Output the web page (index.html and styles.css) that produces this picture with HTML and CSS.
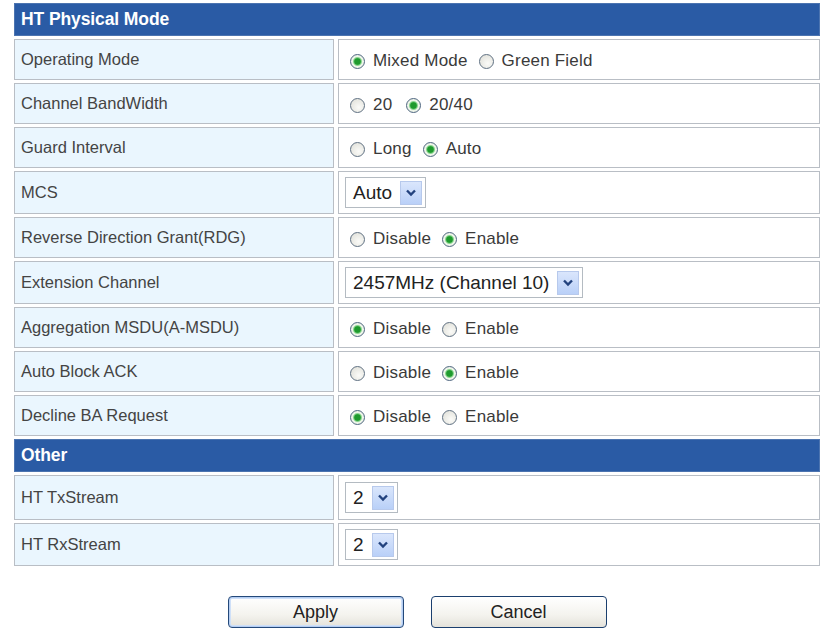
FILE: index.html
```html
<!DOCTYPE html>
<html>
<head>
<meta charset="utf-8">
<link rel="stylesheet" href="styles.css">
</head>
<body>
<div class="page">
<table class="cfg">
  <colgroup><col class="c1"><col class="c2"></colgroup>
  <tr class="head"><td colspan="2">HT Physical Mode</td></tr>
  <tr>
    <td class="lbl">Operating Mode</td>
    <td class="val"><label class="opt"><span class="radio on"></span>Mixed Mode</label><label class="opt"><span class="radio"></span>Green Field</label></td>
  </tr>
  <tr>
    <td class="lbl">Channel BandWidth</td>
    <td class="val"><label class="opt"><span class="radio"></span>20</label><label class="opt wide"><span class="radio on"></span>20/40</label></td>
  </tr>
  <tr>
    <td class="lbl">Guard Interval</td>
    <td class="val"><label class="opt"><span class="radio"></span>Long</label><label class="opt"><span class="radio on"></span>Auto</label></td>
  </tr>
  <tr class="tall">
    <td class="lbl">MCS</td>
    <td class="val"><span class="sel"><span class="sv">Auto</span><span class="arr"><svg width="12" height="8" viewBox="0 0 12 8"><path d="M2 1.5 L6 5.5 L10 1.5" fill="none" stroke="#22427e" stroke-width="2.4"/></svg></span></span></td>
  </tr>
  <tr>
    <td class="lbl">Reverse Direction Grant(RDG)</td>
    <td class="val"><label class="opt"><span class="radio"></span>Disable</label><label class="opt"><span class="radio on"></span>Enable</label></td>
  </tr>
  <tr class="tall">
    <td class="lbl">Extension Channel</td>
    <td class="val"><span class="sel"><span class="sv">2457MHz (Channel 10)</span><span class="arr"><svg width="12" height="8" viewBox="0 0 12 8"><path d="M2 1.5 L6 5.5 L10 1.5" fill="none" stroke="#22427e" stroke-width="2.4"/></svg></span></span></td>
  </tr>
  <tr>
    <td class="lbl">Aggregation MSDU(A-MSDU)</td>
    <td class="val"><label class="opt"><span class="radio on"></span>Disable</label><label class="opt"><span class="radio"></span>Enable</label></td>
  </tr>
  <tr>
    <td class="lbl">Auto Block ACK</td>
    <td class="val"><label class="opt"><span class="radio"></span>Disable</label><label class="opt"><span class="radio on"></span>Enable</label></td>
  </tr>
  <tr>
    <td class="lbl">Decline BA Request</td>
    <td class="val"><label class="opt"><span class="radio on"></span>Disable</label><label class="opt"><span class="radio"></span>Enable</label></td>
  </tr>
  <tr class="head"><td colspan="2">Other</td></tr>
  <tr class="tall2">
    <td class="lbl">HT TxStream</td>
    <td class="val"><span class="sel"><span class="sv">2</span><span class="arr"><svg width="12" height="8" viewBox="0 0 12 8"><path d="M2 1.5 L6 5.5 L10 1.5" fill="none" stroke="#22427e" stroke-width="2.4"/></svg></span></span></td>
  </tr>
  <tr class="tall">
    <td class="lbl">HT RxStream</td>
    <td class="val"><span class="sel"><span class="sv">2</span><span class="arr"><svg width="12" height="8" viewBox="0 0 12 8"><path d="M2 1.5 L6 5.5 L10 1.5" fill="none" stroke="#22427e" stroke-width="2.4"/></svg></span></span></td>
  </tr>
</table>
<div class="buttons">
  <button class="btn default">Apply</button>
  <button class="btn">Cancel</button>
</div>
</div>
</body>
</html>
```
FILE: styles.css
```css
html, body {
  margin: 0;
  padding: 0;
  background: #ffffff;
}
body {
  font-family: "Liberation Sans", Arial, sans-serif;
  color: #333;
}
.page {
  width: 833px;
}
.cfg {
  margin-left: 10px;
  width: 814px;
  border-collapse: separate;
  border-spacing: 4px 3px;
  table-layout: fixed;
}
.c1 { width: 320px; }
.cfg td {
  padding: 0;
  box-sizing: border-box;
  line-height: 1.1;
}
.cfg tr {
  height: 41px;
}
.cfg tr.head { height: 33px; }
.cfg tr.tall { height: 43px; }
.cfg tr.tall2 { height: 45px; }
.head td {
  background: #2a5ba5;
  border: 1px solid #4c74b0;
  color: #fff;
  font-weight: bold;
  font-size: 17.5px;
  padding-left: 6px;
  letter-spacing: -0.1px;
}
.lbl {
  background: #eaf6fe;
  border: 1px solid #b9bec5;
  font-size: 16.5px;
  color: #444;
  padding-left: 6px !important;
}
.val {
  background: #fff;
  border: 1px solid #b9bec5;
  padding-left: 6px !important;
  font-size: 17px;
  color: #3a3a3a;
}
.opt {
  display: inline-flex;
  align-items: center;
  vertical-align: middle;
  margin-top: 3px;
  margin-right: 11px;
  letter-spacing: 0.2px;
}
.opt.wide { margin-left: 3px; }
.radio {
  width: 15px;
  height: 15px;
  box-sizing: border-box;
  border-radius: 50%;
  border: 1.5px solid #5f7082;
  background: radial-gradient(circle at 60% 65%, #fbfbf8 0, #e6e6e0 70%, #d2d2cc 100%);
  margin-left: 5px;
  margin-right: 8px;
  flex: none;
}
.opt + .opt .radio { margin-left: 0; }
.radio.on {
  border-color: #4f6680;
  background: radial-gradient(circle, #1f9a2e 0 2.8px, #79cf80 3.8px, #eef6ea 5px, #e9ece4 100%);
}
.sel {
  display: inline-flex;
  align-items: center;
  height: 31px;
  box-sizing: border-box;
  border: 1px solid #b4bbc2;
  padding: 2px 3px 2px 7px;
  background: #fff;
  vertical-align: middle;
}
.sv {
  font-size: 19px;
  color: #222;
  margin-right: 8px;
  line-height: 1;
}
.arr {
  width: 22px;
  height: 24px;
  box-sizing: border-box;
  border: 1px solid #b7c9ec;
  background: linear-gradient(#dae6fc, #b9d0f8);
  display: flex;
  align-items: center;
  justify-content: center;
}
.buttons {
  display: flex;
  justify-content: center;
  gap: 27px;
  margin-top: 27px;
  padding-left: 1px;
}
.btn {
  width: 176px;
  height: 32px;
  font-family: "Liberation Sans", Arial, sans-serif;
  font-size: 18px;
  color: #222;
  border: 1px solid #1b3f6e;
  border-radius: 4px;
  background: linear-gradient(#ffffff 0%, #f4f3ee 60%, #e4e2da 100%);
  padding: 0;
}
.btn.default {
  border-color: #24497a;
  box-shadow: inset 0 0 0 1px #b4cdf2, inset 0 0 0 2px #cfe0f8;
}
```
